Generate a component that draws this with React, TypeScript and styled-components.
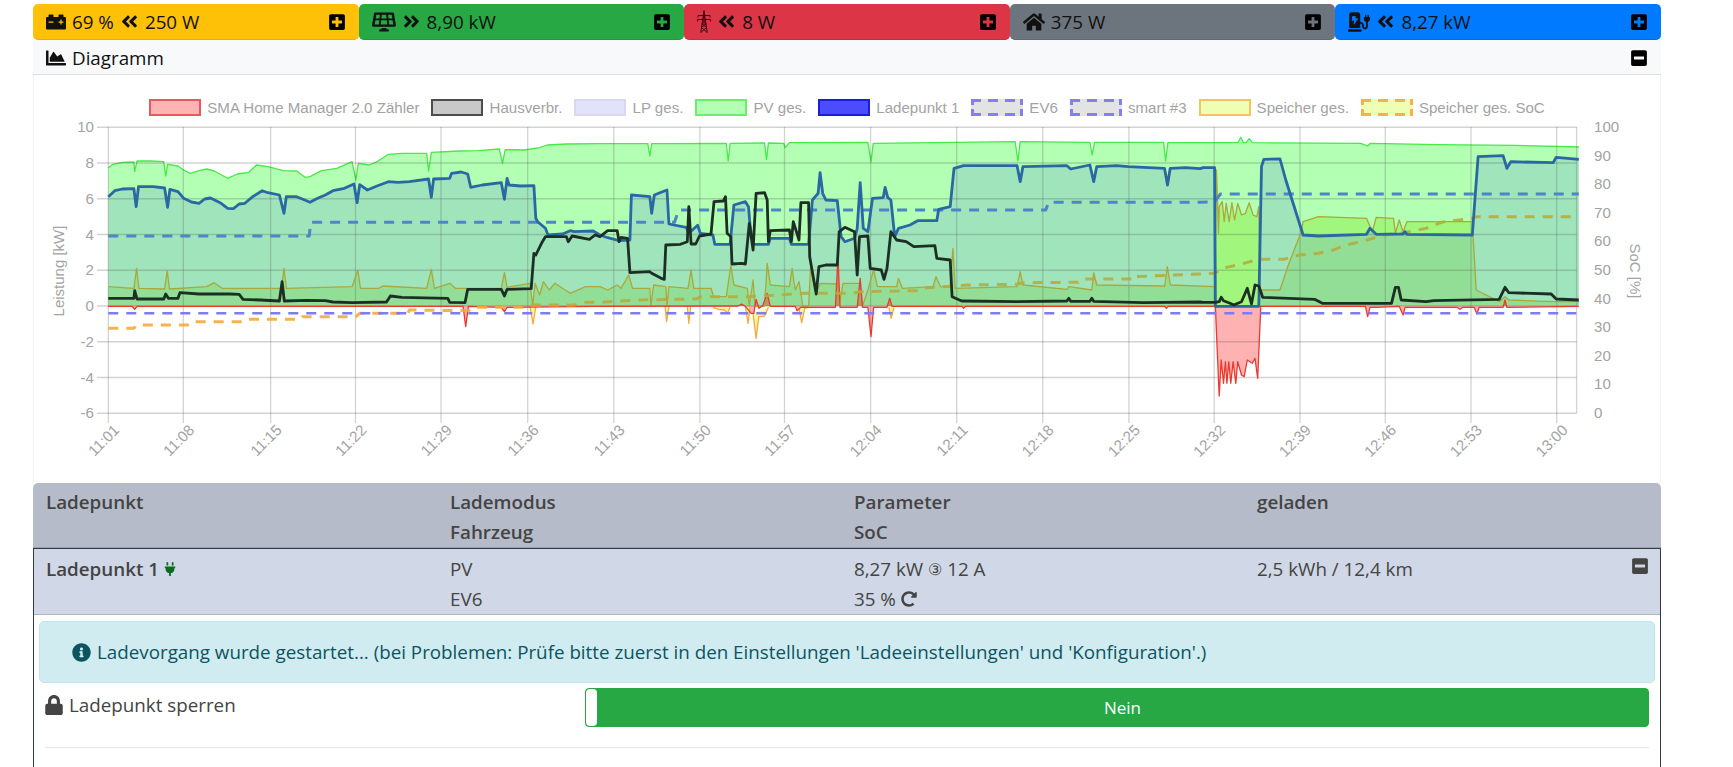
import styled, { createGlobalStyle } from "styled-components";
import {
  FaAngleDoubleLeft,
  FaAngleDoubleRight,
  FaCarBattery,
  FaChartArea,
  FaChargingStation,
  FaHome,
  FaInfoCircle,
  FaLock,
  FaMinusSquare,
  FaPlug,
  FaPlusSquare,
  FaRedoAlt,
  FaSolarPanel,
} from "react-icons/fa";

const GlobalStyle = createGlobalStyle`
  html, body {
    margin: 0;
    padding: 0;
    height: 100%;
    overflow: hidden;
    background: #fff;
    color: #444;
    font-family: "Open Sans", "Noto Sans", sans-serif;
    font-size: 18.8px;
  }
`;

const Page = styled.div`
  width: 1628px;
  height: 767px;
  margin-left: 33px;
  padding-top: 4px;
  box-sizing: border-box;
  display: flex;
  flex-direction: column;
`;

const TopRow = styled.div`
  display: grid;
  grid-template-columns: repeat(5, 1fr);
  height: 36px;
`;

const StatCard = styled.div<{ $bg: string; $edge: string }>`
  background: ${(p) => p.$bg};
  border-bottom: 1px solid ${(p) => p.$edge};
  border-radius: 5px;
  display: flex;
  align-items: center;
  gap: 6px;
  padding: 0 13px;
  color: #111;
  white-space: nowrap;
`;

const StatToggle = styled.span`
  margin-left: auto;
  display: flex;
  color: #000;
`;

const DiagramHeader = styled.div`
  height: 35px;
  background: #f8f9fa;
  border-bottom: 1px solid #dfdfdf;
  display: flex;
  align-items: center;
  gap: 6px;
  padding: 1px 13px 0;
  box-sizing: border-box;
  color: #111;
`;

const ChartPanel = styled.div`
  height: 408px;
  border-left: 1px solid #f3f3f3;
  border-right: 1px solid #f3f3f3;
  box-sizing: border-box;
`;

const Legend = styled.div`
  height: 41px;
  padding-top: 24px;
  box-sizing: border-box;
  display: flex;
  justify-content: center;
  gap: 12px;
  font-family: "Liberation Sans", Arial, sans-serif;
  font-size: 15.1px;
  color: #a3a3a3;
`;

const LegendItem = styled.div`
  display: flex;
  align-items: center;
  gap: 6px;
  height: 17px;
  white-space: nowrap;
`;

const LegendBox = styled.span<{ $fill: string; $line: string }>`
  width: 52px;
  height: 17px;
  box-sizing: border-box;
  background: ${(p) => p.$fill};
  border: 2px solid ${(p) => p.$line};
`;

const DashedLegendBox = styled.span<{ $fill: string; $line: string }>`
  width: 52px;
  height: 17px;
  --h: repeating-linear-gradient(90deg, ${(p) => p.$line} 0 10px, transparent 10px 17px);
  --v: repeating-linear-gradient(0deg, ${(p) => p.$line} 0 7px, transparent 7px 11px);
  background:
    var(--h) top / 100% 3px no-repeat,
    var(--h) bottom / 100% 3px no-repeat,
    var(--v) left / 3px 100% no-repeat,
    var(--v) right / 3px 100% no-repeat,
    ${(p) => p.$fill};
`;

const Plot = styled.svg`
  display: block;
  width: 1626px;
  height: 367px;
`;

const TableHead = styled.div`
  height: 65px;
  background: #b5bbc9;
  border-radius: 5px 5px 0 0;
  border-bottom: 1px solid #9aa0ac;
  box-sizing: border-box;
`;

const Cols = styled.div`
  display: grid;
  grid-template-columns: 404px 404px 403px 1fr;
  padding: 4px 12px 0 13px;
  line-height: 30px;
  position: relative;
`;

const RowCols = styled(Cols)`
  padding-top: 5px;
  padding-left: 12px;
`;

const HeadCell = styled.div`
  font-weight: 600;
  color: #444;
`;

const LoadPoint = styled.div`
  flex: 1;
  border: 1px solid #343a40;
  border-bottom: none;
  display: flex;
  flex-direction: column;
`;

const PointRow = styled.div`
  height: 66px;
  background: #d0d7e6;
  border-bottom: 1px solid #aeb3bd;
  box-sizing: border-box;
`;

const PointName = styled.div`
  font-weight: 600;
  display: flex;
  align-items: center;
  gap: 4px;
`;

const Plugged = styled.span`
  display: flex;
  color: #0b6b1e;
`;

const CollapseIcon = styled.span`
  position: absolute;
  right: 11px;
  top: 8px;
  display: flex;
  color: #444;
`;

const Value = styled.div`
  display: flex;
  align-items: center;
  gap: 5px;
`;

const Amps = styled.span`
  font-size: 16px;
`;

const InfoBox = styled.div`
  margin: 6px 5px 0 5px;
  height: 62px;
  box-sizing: border-box;
  background: #d1ecf1;
  border: 1px solid #bee5eb;
  border-radius: 5px;
  color: #0c5460;
  display: flex;
  align-items: center;
  gap: 6px;
  padding-left: 32px;
`;

const SettingRow = styled.div`
  display: flex;
  padding: 5px 11px 0 10px;
  height: 39px;
`;

const SettingLabel = styled.div`
  width: 541px;
  display: flex;
  align-items: center;
  gap: 5px;
  height: 34px;
`;

const Toggle = styled.div`
  flex: 1;
  height: 39px;
  display: flex;
  box-sizing: border-box;
  border: 1px solid #28a745;
  border-radius: 4px;
  background: #28a745;
  color: #fff;
  font-size: 17px;
  overflow: hidden;
`;

const ToggleHandle = styled.span`
  width: 11px;
  background: #fff;
  border-radius: 4px;
`;

const ToggleText = styled.span`
  flex: 1;
  display: flex;
  align-items: center;
  justify-content: center;
`;

const Divider = styled.hr`
  margin: 20px 11px 0;
  border: none;
  border-top: 1px solid #e6e6e6;
`;

// traces were read off the chart in three chunks, each with its own x origin and scale
const chunk = (x0: number, sx: number) => (s: string) =>
  s
    .trim()
    .split(/\s+/)
    .map((p) => {
      const [a, b] = p.split(",").map(Number);
      return [x0 + a / sx, 100 + b / 3];
    });
const A = chunk(0, 2.613);
const B = chunk(600, 2.613);
const C = chunk(1130, 2.6);

const line = (pts: number[][]) =>
  "M" + pts.map(([x, y]) => `${x.toFixed(1)} ${y.toFixed(1)}`).join("L");
const area = (pts: number[][]) =>
  `${line(pts)}L${pts[pts.length - 1][0].toFixed(1)} 306L${pts[0][0].toFixed(1)} 306Z`;

const pv = [
  ...A("283,203 295,193 320,187 350,186 352,215 358,183 395,183 428,185 433,228 438,193 465,198 480,210 497,220 520,212 540,207 560,213 595,235 620,222 650,217 670,195 700,200 740,212 775,213 797,232 810,230 840,212 880,205 920,185 930,240 936,190 965,195 985,185 1015,163 1050,160 1115,160 1120,213 1127,157 1200,153 1250,152 1305,147 1313,190 1320,149 1370,150 1410,143 1430,135 1480,132 1568,131"),
  ...B("125,131 130,168 135,131 330,130 335,183 340,130 430,129 435,178 440,129 480,130 484,143 495,128 700,127 708,186 714,130 1085,125 1092,183 1098,125 1280,127 1286,165 1292,127 1473,127 1478,183 1484,128"),
  ...C("130,128 280,128 288,112 295,128 302,128 310,116 318,128 600,130 618,138 625,130 800,134 1000,136 1167,141"),
];

const charge = [
  ...A("283,290 300,272 320,267 350,266 356,320 362,260 400,260 430,264 438,322 444,268 465,275 480,295 500,306 520,310 535,297 550,294 575,308 595,325 610,326 625,312 640,310 660,290 685,272 700,278 730,285 742,340 748,290 775,290 790,297 810,307 830,295 850,285 870,272 900,265 925,252 933,308 940,254 960,270 985,258 1015,245 1040,247 1070,245 1120,237 1127,292 1133,237 1175,235 1180,220 1205,216 1222,222 1230,262 1260,255 1310,248 1318,298 1325,235 1330,255 1360,258 1395,257 1400,355 1405,365 1415,375 1425,385 1432,405 1470,402 1490,392 1500,395 1550,393"),
  ...B("0,405 20,413 50,422 78,420 82,285 130,290 135,340 142,285 175,270 180,372 225,382 232,400 255,376 262,400 295,405 300,433 340,433 350,315 380,305 388,320 392,375 400,433 440,433 445,415 495,415 500,433 545,433 555,300 570,280 575,218 582,280 590,300 620,302 630,410 640,425 665,415 672,385 680,248 688,385 700,395 712,295 740,293 745,262 752,293 760,300 770,410 780,385 810,375 830,362 880,362 885,328 915,320 925,205 950,197 1090,197 1098,245 1105,200 1220,197 1230,207 1280,195 1290,245 1298,200 1350,197 1380,200 1475,205 1483,255 1490,205 1530,203 1568,206"),
  ...C("190,203 220,203 222,619 335,619 342,200 348,178 390,177 405,240 450,405 490,408 615,403 624,385 640,403 710,402 715,395 720,403 890,405 905,170 970,167 980,205 990,185 1100,188 1108,172 1167,178"),
];

const house = [
  ...A("283,595 350,595 352,572 358,597 428,597 433,582 440,595 465,595 470,578 520,582 600,582 625,583 635,598 680,600 730,603 737,545 743,603 800,601 850,602 870,606 920,608 1010,606 1020,588 1050,592 1170,595 1175,607 1215,608 1222,568 1310,568 1318,588 1325,568 1388,566 1395,460 1400,465 1415,430 1425,410 1480,410 1485,425 1495,408 1540,418 1555,405"),
  ...B("0,410 20,392 45,392 50,425 55,412 72,415 78,518 130,515 135,520 160,535 168,538 172,435 210,433 228,425 232,320 238,432 250,432 260,408 290,402 298,305 322,303 328,290 332,400 342,410 345,492 370,490 380,492 390,370 400,450 408,280 430,278 437,300 440,425 445,392 495,390 500,425 505,365 520,420 525,308 545,308 548,470 565,582 572,500 590,495 620,495 625,395 640,382 665,395 672,525 678,410 700,408 706,505 735,510 742,538 750,505 760,395 775,420 800,425 820,440 875,437 880,475 915,480 920,590 945,603 1090,605 1220,603 1225,595 1230,604 1280,604 1285,595 1290,604 1420,608 1568,606"),
  ...C("190,607 222,607 232,605 237,592 243,602 260,610 270,615 290,605 305,565 316,612 325,555 335,558 345,592 480,598 500,610 610,610 680,610 690,562 698,562 705,600 770,605 790,602 960,598 975,562 985,578 1095,582 1108,597 1167,600"),
];

const storage = [
  ...A("283,560 350,565 357,505 363,565 430,567 437,512 443,567 540,560 560,548 580,565 735,565 742,505 748,565 920,560 935,510 942,565 990,565 1000,558 1115,565 1127,508 1135,565 1175,550 1190,565 1310,565 1318,518 1325,562 1385,550 1392,618 1398,550 1410,585 1420,545 1435,570 1450,550 1490,580 1530,560"),
  ...B("0,560 20,570 45,555 55,565 75,525 85,565 130,565 133,618 140,555 172,560 175,618 180,560 230,565 238,510 245,565 290,565 297,590 330,590 342,495 350,555 385,565 390,618 400,540 405,618 430,618 437,490 445,555 495,560 502,505 510,570 520,545 530,618 545,618 550,505 565,580 575,550 620,552 625,618 635,550 680,550 686,618 700,570 715,510 725,560 775,560 780,535 790,565 870,560 878,530 890,560 915,562 922,445 928,565 1090,560 1098,515 1105,555 1220,568 1225,560 1285,570 1290,518 1298,555 1475,558"),
  ...C("90,560 97,500 105,555 220,560 225,210 230,400 232,320 240,305 245,365 250,310 258,365 265,308 272,360 280,310 290,345 300,340 310,308 320,345 330,350 335,320 338,570 390,570 410,500 445,395 450,365 490,350 615,355 630,395 640,352 685,355 690,400 700,360 710,395 720,365 890,365 900,570 960,605 975,590 985,600 1100,605 1167,605"),
];

const discharge = [
  A("1385,619 1393,672 1400,619"),
  B("170,619 174,665 180,619"),
  B("228,619 232,670 237,619"),
  B("295,622 310,628 325,630 333,640 340,622"),
  B("380,619 387,670 392,622"),
  B("400,640 408,715 415,650 430,648 440,622"),
  B("520,625 527,668 535,625 545,622"),
  B("755,622 761,655 768,622"),
];

const grid = [
  ...A("283,619 345,619 352,628 358,619 1210,619 1217,680 1224,619 1310,622 1318,635 1325,622 1550,619"),
  ...B("0,619 360,618 370,612 380,619 395,640 402,640 408,598 415,625 425,618 437,580 445,619 510,619 515,632 525,622 615,622 622,470 627,622 672,622 680,535 686,622 700,622 708,710 715,622 750,622 757,595 763,619 945,619 950,625 955,619 1475,619 1480,625 1485,619 1568,619"),
  ...C("190,619 222,619 225,700 232,888 237,780 243,850 248,785 252,850 257,785 262,850 268,785 275,850 280,785 290,825 297,830 305,780 318,790 325,775 332,835 340,619 612,619 618,650 624,622 640,622 700,619 710,645 715,622 850,622 858,628 865,622 895,622 902,642 908,622 970,622 975,600 980,622 1167,619"),
];

const evSoc = [
  ...A("283,408 808,408 812,367 1568,367"),
  ...B("195,367 205,330 1165,330 1172,307 1568,307"),
  ...C("220,305 235,282 1167,282"),
];

const batterySoc = [
  ...A("283,685 350,685 358,675 490,675 500,665 640,665 650,658 785,658 790,650 930,650 940,640 1065,640 1070,630 1225,632 1235,622 1365,622 1380,615 1500,615 1530,607"),
  ...B("0,607 100,600 250,597 265,590 385,590 535,580 660,580 680,575 830,572 840,565 960,555 1090,553 1105,548 1250,547 1260,537 1395,537"),
  ...C("10,530 220,520 240,505 280,495 335,478 400,478 440,465 490,460 530,450 555,437 610,422 660,405 720,397 770,385 810,367 890,355 900,350 1167,350"),
];

const timeTicks: [number, string][] = [
  [108.3, "11:01"], [183.3, "11:08"], [270.6, "11:15"], [355.5, "11:22"], [441, "11:29"],
  [527.7, "11:36"], [613.8, "11:43"], [699.9, "11:50"], [784.5, "11:57"], [870.6, "12:04"],
  [956.7, "12:11"], [1042.8, "12:18"], [1128.9, "12:25"], [1214.2, "12:32"], [1300, "12:39"],
  [1385.3, "12:46"], [1471, "12:53"], [1556.7, "13:00"],
];

const PLOT_TOP = 127;
const PLOT_BOTTOM = 413;
const PLOT_LEFT = 108.3;
const PLOT_RIGHT = 1576.6;
const GRID_STROKE = "rgba(80,80,80,0.25)";
const kwTicks = [10, 8, 6, 4, 2, 0, -2, -4, -6];
const socTicks = [100, 90, 80, 70, 60, 50, 40, 30, 20, 10, 0];

const legend = [
  { label: "SMA Home Manager 2.0 Zähler", fill: "#ffb3b3", line: "#e8595f" },
  { label: "Hausverbr.", fill: "#c8c8c8", line: "#4d4d4d" },
  { label: "LP ges.", fill: "#e2e2fb", line: "#d8d8ee" },
  { label: "PV ges.", fill: "#b3ffb3", line: "#6eec6e" },
  { label: "Ladepunkt 1", fill: "#4c4cff", line: "#1c1ce0" },
  { label: "EV6", fill: "#e3e3e3", line: "#8380ea", dashed: true },
  { label: "smart #3", fill: "#e3e3e3", line: "#8380ea", dashed: true },
  { label: "Speicher ges.", fill: "#eeffb3", line: "#f2c55e" },
  { label: "Speicher ges. SoC", fill: "#eeffb3", line: "#f3b24c", dashed: true },
];

function Chart() {
  const kwY = (v: number) => 306 - v * 17.875;
  return (
    <Plot viewBox="34 116 1626 367" fontFamily="'Liberation Sans', Arial, sans-serif" fontSize="15.1" fill="#a3a3a3" strokeLinejoin="round">
      <defs>
        <linearGradient id="socStroke" gradientUnits="userSpaceOnUse" x1="0" y1="127" x2="0" y2="413">
          <stop offset="0.625" stopColor="#b3ad3f" stopOpacity="0.9" />
          <stop offset="0.625" stopColor="#f6a93b" stopOpacity="0.9" />
        </linearGradient>
      </defs>

      <path d={area(pv)} fill="#b3ffb3" />
      <path d={line(pv)} fill="none" stroke="#45ea45" strokeWidth="1.3" />
      <path d={area(storage)} fill="rgba(120,230,0,0.3)" />
      <path d={area(charge)} fill="rgba(116,165,210,0.3)" />
      <path d={area(grid)} fill="rgba(255,0,0,0.3)" />
      {discharge.map((d, i) => (
        <path key={i} d={line(d)} fill="#fff7a0" stroke="#f6a93b" strokeWidth="1.3" />
      ))}

      {kwTicks.map((v) => (
        <g key={v}>
          <line x1={97} x2={PLOT_RIGHT} y1={kwY(v)} y2={kwY(v)} stroke={GRID_STROKE} strokeWidth="1.3" />
          <text x={94} y={kwY(v) + 5} textAnchor="end">{v}</text>
        </g>
      ))}
      {socTicks.map((v) => (
        <text key={v} x={1594} y={PLOT_BOTTOM - v * 2.86 + 5}>{v}</text>
      ))}
      {timeTicks.map(([x, t]) => (
        <g key={t}>
          <line x1={x} x2={x} y1={PLOT_TOP} y2={PLOT_BOTTOM + 10} stroke={GRID_STROKE} strokeWidth="1.3" />
          <text textAnchor="end" transform={`translate(${x + 12} 431) rotate(-45)`}>{t}</text>
        </g>
      ))}
      <line x1={PLOT_RIGHT} x2={PLOT_RIGHT} y1={PLOT_TOP} y2={PLOT_BOTTOM} stroke={GRID_STROKE} strokeWidth="1.3" />
      <text textAnchor="middle" transform="translate(64 271) rotate(-90)" fontSize="15">Leistung [kW]</text>
      <text textAnchor="middle" transform="translate(1630 271) rotate(90)" fontSize="15">SoC [%]</text>

      <path d={line(storage)} fill="none" stroke="#aaa83c" strokeWidth="1.3" />
      <path d={line(grid)} fill="none" stroke="#ea3a30" strokeWidth="1.3" />
      <path d={line(evSoc)} fill="none" stroke="#4c86c4" strokeWidth="3" strokeDasharray="10 8" />
      <path d={line(batterySoc)} fill="none" stroke="url(#socStroke)" strokeWidth="3" strokeDasharray="10 8" />
      <line x1={PLOT_LEFT} x2={PLOT_RIGHT} y1={313.3} y2={313.3} stroke="#7f7bf0" strokeWidth="2.6" strokeDasharray="10 8" />
      <path d={line(charge)} fill="none" stroke="#2a68a3" strokeWidth="2.8" />
      <path d={line(house)} fill="none" stroke="#1d2f24" strokeWidth="2.8" />
    </Plot>
  );
}

function TowerIcon() {
  return (
    <svg width="14" height="23" viewBox="0 0 14 23" fill="none" stroke="#2a0a0c" strokeWidth="0.9">
      <path d="M7 0.5L3.8 22.5M7 0.5L10.2 22.5M1 5.5H13M0.5 9.5H13.5M1 5.5V7.5M13 5.5V7.5M0.5 9.5V11.5M13.5 9.5V11.5" />
      <path d="M5.9 5.5L8.6 9.5L5 14L9.6 17.5L3.8 22.5M8.1 5.5L5.4 9.5L9 14L4.4 17.5L10.2 22.5M4.6 14H9.4" />
    </svg>
  );
}

function App() {
  return (
    <>
      <GlobalStyle />
      <Page>
        <TopRow>
          <StatCard $bg="#ffc107" $edge="#e6ae06">
            <FaCarBattery size={20} />
            <span>69 %</span>
            <FaAngleDoubleLeft size={19} />
            <span>250 W</span>
            <StatToggle><FaPlusSquare size={18} /></StatToggle>
          </StatCard>
          <StatCard $bg="#28a745" $edge="#24963e">
            <FaSolarPanel size={24} />
            <FaAngleDoubleRight size={19} />
            <span>8,90 kW</span>
            <StatToggle><FaPlusSquare size={18} /></StatToggle>
          </StatCard>
          <StatCard $bg="#dc3545" $edge="#c6303e">
            <TowerIcon />
            <FaAngleDoubleLeft size={19} />
            <span>8 W</span>
            <StatToggle><FaPlusSquare size={18} /></StatToggle>
          </StatCard>
          <StatCard $bg="#6c757d" $edge="#616970">
            <FaHome size={22} />
            <span>375 W</span>
            <StatToggle><FaPlusSquare size={18} /></StatToggle>
          </StatCard>
          <StatCard $bg="#007bff" $edge="#006fe6">
            <FaChargingStation size={22} />
            <FaAngleDoubleLeft size={19} />
            <span>8,27 kW</span>
            <StatToggle><FaPlusSquare size={18} /></StatToggle>
          </StatCard>
        </TopRow>

        <DiagramHeader>
          <FaChartArea size={20} />
          <span>Diagramm</span>
          <StatToggle><FaMinusSquare size={18} /></StatToggle>
        </DiagramHeader>

        <ChartPanel>
          <Legend>
            {legend.map((l) => (
              <LegendItem key={l.label}>
                {l.dashed ? (
                  <DashedLegendBox $fill={l.fill} $line={l.line} />
                ) : (
                  <LegendBox $fill={l.fill} $line={l.line} />
                )}
                {l.label}
              </LegendItem>
            ))}
          </Legend>
          <Chart />
        </ChartPanel>

        <TableHead>
          <Cols>
            <HeadCell>Ladepunkt</HeadCell>
            <HeadCell>Lademodus</HeadCell>
            <HeadCell>Parameter</HeadCell>
            <HeadCell>geladen</HeadCell>
            <HeadCell />
            <HeadCell>Fahrzeug</HeadCell>
            <HeadCell>SoC</HeadCell>
          </Cols>
        </TableHead>

        <LoadPoint>
          <PointRow>
            <RowCols>
              <PointName>
                Ladepunkt 1
                <Plugged><FaPlug size={14} /></Plugged>
              </PointName>
              <Value>PV</Value>
              <Value>8,27 kW <Amps>③</Amps> 12 A</Value>
              <Value>2,5 kWh / 12,4 km</Value>
              <div />
              <Value>EV6</Value>
              <Value>35 % <FaRedoAlt size={16} /></Value>
              <CollapseIcon><FaMinusSquare size={18} /></CollapseIcon>
            </RowCols>
          </PointRow>

          <InfoBox>
            <FaInfoCircle size={19} />
            Ladevorgang wurde gestartet... (bei Problemen: Prüfe bitte zuerst in den Einstellungen 'Ladeeinstellungen' und 'Konfiguration'.)
          </InfoBox>

          <SettingRow>
            <SettingLabel>
              <FaLock size={20} />
              Ladepunkt sperren
            </SettingLabel>
            <Toggle>
              <ToggleHandle />
              <ToggleText>Nein</ToggleText>
            </Toggle>
          </SettingRow>

          <Divider />
        </LoadPoint>
      </Page>
    </>
  );
}

export default App;
